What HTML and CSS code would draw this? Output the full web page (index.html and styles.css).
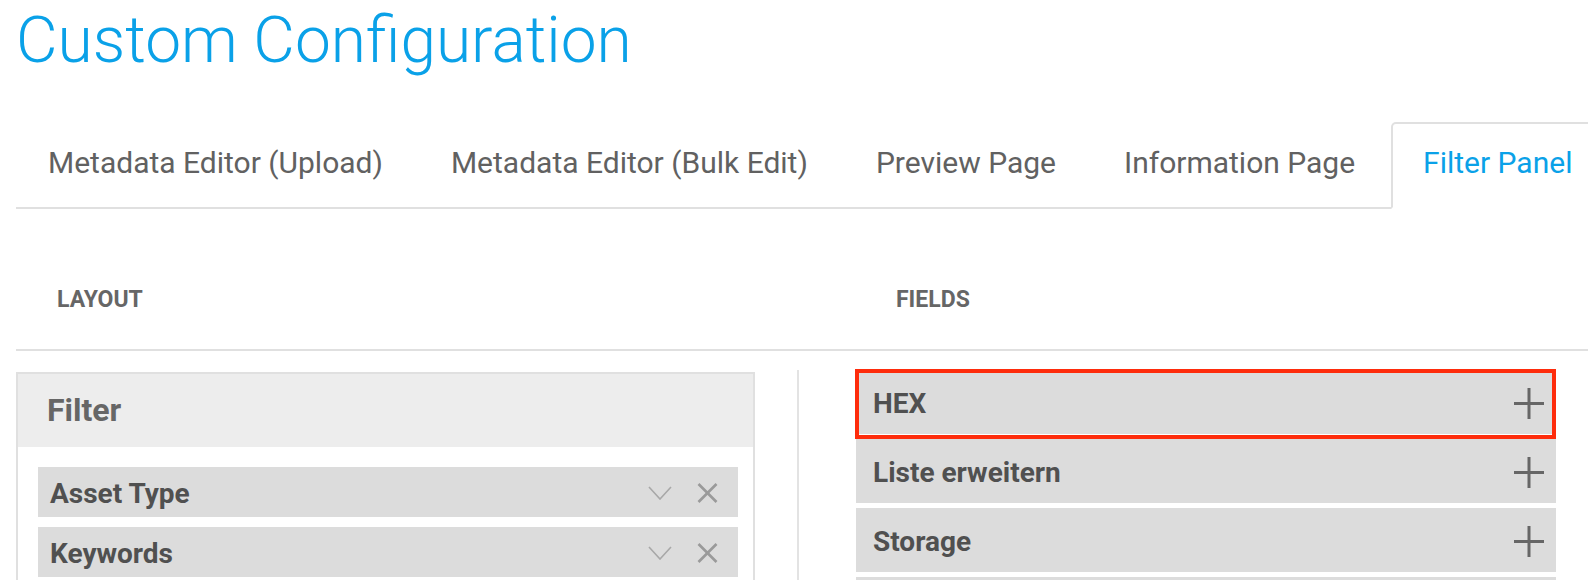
FILE: index.html
```html
<!DOCTYPE html>
<html lang="en">
<head>
    <meta charset="UTF-8">
    <title>Custom Configuration</title>
    <link rel="stylesheet" href="styles.css">
</head>
<body>
    <div class="page">
        <h1 class="title">Custom Configuration</h1>

        <ul class="tabs">
            <li><a href="#">Metadata Editor (Upload)</a></li>
            <li><a href="#">Metadata Editor (Bulk Edit)</a></li>
            <li><a href="#">Preview Page</a></li>
            <li><a href="#">Information Page</a></li>
            <li class="active"><a href="#">Filter Panel</a></li>
        </ul>

        <div class="columns head">
            <div class="col-label layout-label">Layout</div>
            <div class="col-label fields-label">Fields</div>
        </div>

        <div class="columns">
            <div class="layout-col">
                <div class="panel">
                    <div class="panel-head">Filter</div>
                    <div class="panel-body">
                        <div class="item">
                            <span class="item-name">Asset Type</span>
                            <span class="item-actions">
                                <svg class="icon-chevron" width="24" height="14" viewBox="0 0 24 14"><polyline points="1,1 12,13 23,1" /></svg>
                                <svg class="icon-close" width="21" height="20" viewBox="0 0 21 20"><line x1="1.5" y1="1" x2="19.5" y2="19" /><line x1="19.5" y1="1" x2="1.5" y2="19" /></svg>
                            </span>
                        </div>
                        <div class="item">
                            <span class="item-name">Keywords</span>
                            <span class="item-actions">
                                <svg class="icon-chevron" width="24" height="14" viewBox="0 0 24 14"><polyline points="1,1 12,13 23,1" /></svg>
                                <svg class="icon-close" width="21" height="20" viewBox="0 0 21 20"><line x1="1.5" y1="1" x2="19.5" y2="19" /><line x1="19.5" y1="1" x2="1.5" y2="19" /></svg>
                            </span>
                        </div>
                    </div>
                </div>
            </div>

            <div class="fields-col">
                <div class="field highlighted">
                    <span>HEX</span>
                    <svg class="icon-plus" width="30" height="31" viewBox="0 0 30 31"><line x1="0" y1="15.5" x2="30" y2="15.5" /><line x1="15" y1="0" x2="15" y2="31" /></svg>
                </div>
                <div class="field">
                    <span>Liste erweitern</span>
                    <svg class="icon-plus" width="30" height="31" viewBox="0 0 30 31"><line x1="0" y1="15.5" x2="30" y2="15.5" /><line x1="15" y1="0" x2="15" y2="31" /></svg>
                </div>
                <div class="field">
                    <span>Storage</span>
                    <svg class="icon-plus" width="30" height="31" viewBox="0 0 30 31"><line x1="0" y1="15.5" x2="30" y2="15.5" /><line x1="15" y1="0" x2="15" y2="31" /></svg>
                </div>
                <div class="field"></div>
            </div>
        </div>
    </div>
</body>
</html>
```

FILE: styles.css
```css
html, body {
    margin: 0;
    height: 580px;
    overflow: hidden;
    background: #fff;
}
body {
    font-family: Roboto, "Liberation Sans", sans-serif;
    color: #666;
}
.page {
    padding-left: 16px;
}
.title {
    margin: 0;
    font-size: 64px;
    font-weight: 300;
    line-height: 82px;
    color: #0aa1e8;
}

/* tabs */
.tabs {
    display: flex;
    flex-wrap: nowrap;
    list-style: none;
    margin: 40px 0 0;
    padding: 0;
    border-bottom: 2px solid #e0e0e0;
    white-space: nowrap;
}
.tabs li {
    margin-bottom: -2px;
    margin-right: 4px;
}
.tabs a {
    display: block;
    padding: 21px 30px 26px;
    font-size: 30px;
    line-height: 36px;
    color: #616161;
    text-decoration: none;
    border: 2px solid transparent;
    border-radius: 5px 5px 0 0;
}
.tabs .active a {
    color: #0aa1e8;
    background: #fff;
    border-color: #e0e0e0;
    border-bottom-color: #fff;
}

/* columns */
.columns {
    display: grid;
    grid-template-columns: 783px 700px;
    column-gap: 57px;
}
.columns.head {
    padding: 77px 0 35px;
    margin-bottom: 19px;
    border-bottom: 2px solid #e0e0e0;
}
.col-label {
    font-size: 23px;
    font-weight: 700;
    line-height: 28px;
    text-transform: uppercase;
    color: #666;
}
.layout-label {
    padding-left: 41px;
}
.fields-label {
    padding-left: 40px;
}

.layout-col {
    padding-top: 2px;
    border-right: 2px solid #e3e3e3;
    height: 300px;
}
.panel {
    width: 739px;
    box-sizing: border-box;
    border: 2px solid #e0e0e0;
    border-bottom: none;
    height: 300px;
}
.panel-head {
    background: #ededed;
    padding-left: 29px;
    font-size: 32px;
    font-weight: 700;
    line-height: 73px;
    color: #666;
}
.panel-body {
    padding: 20px 15px 0 20px;
}
.item {
    display: flex;
    align-items: center;
    justify-content: space-between;
    height: 50px;
    margin-bottom: 10px;
    padding: 2px 20px 0 12px;
    box-sizing: border-box;
    background: #dcdcdc;
    font-size: 28px;
    font-weight: 700;
    color: #505050;
}
.item-actions {
    display: flex;
    align-items: center;
    gap: 25px;
}
.icon-chevron polyline {
    fill: none;
    stroke: #a8a8a8;
    stroke-width: 1.6;
}
.icon-close line {
    stroke: #9a9a9a;
    stroke-width: 2.6;
}

/* fields */
.field {
    position: relative;
    display: flex;
    align-items: center;
    justify-content: space-between;
    height: 64px;
    margin-bottom: 5px;
    padding: 2px 12px 0 17px;
    box-sizing: border-box;
    background: #dcdcdc;
    font-size: 28px;
    font-weight: 700;
    color: #505050;
}
.field.highlighted::after {
    content: "";
    position: absolute;
    top: -1px;
    left: -1px;
    right: 0;
    bottom: -5px;
    border: 4.5px solid #fe2c0c;
}
.icon-plus line {
    stroke: #666;
    stroke-width: 3;
}
```
